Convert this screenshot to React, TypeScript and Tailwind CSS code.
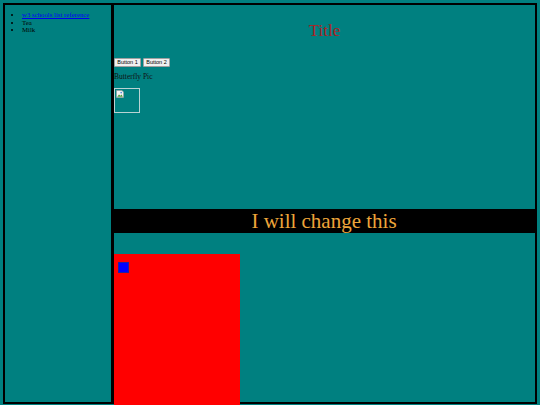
import React from "react";

const serif = { fontFamily: '"Liberation Serif", "Times New Roman", serif' };
const sans = { fontFamily: '"Liberation Sans", Arial, sans-serif' };

function BrokenImage() {
  return (
    <div className="mt-[7px] w-[26px] h-[25px] border border-[#b9d3d3] relative">
      <svg width="8" height="8" viewBox="0 0 8 8" className="absolute left-[1px] top-[1px]">
        <path d="M0.5 0.5 H6 L7.5 2 V7.5 H0.5 Z" fill="#f4f4f4" stroke="#9a9a9a" strokeWidth="0.6" />
        <path d="M1.2 6.8 L3 4.6 L4.4 5.8 L5.6 4.6 L6.8 6.8 Z" fill="#4a9a3a" />
        <circle cx="5.2" cy="2.6" r="0.9" fill="#5b8fd6" />
      </svg>
    </div>
  );
}

export default function App() {
  return (
    <div className="w-[540px] h-[405px] bg-[#008080] overflow-hidden pt-[3px] pl-[3px]" style={serif}>
      <div className="w-[534px] h-[401px] border-2 border-black flex">
        <div className="w-[109px] h-full border-r-[3px] border-black shrink-0">
          <ul className="list-disc pl-[17px] mt-[6px] text-[6.8px] leading-[7.5px] text-black">
            <li>
              <a href="#" className="text-[#0000ee] underline">
                w3 schools list reference
              </a>
            </li>
            <li>Tea</li>
            <li>Milk</li>
          </ul>
        </div>
        <div className="flex-1 flex flex-col">
          <h1 className="shrink-0 text-center text-[17px] leading-[20px] text-[#aa2424] mt-[16px]">Title</h1>
          <div className="shrink-0 flex gap-[2px] mt-[17px]" style={sans}>
            <button className="w-[27px] h-[9px] bg-[#f0f0f0] border border-[#a0a0a0] rounded-[1px] text-[5.5px] leading-none text-black">
              Button 1
            </button>
            <button className="w-[27px] h-[9px] bg-[#f0f0f0] border border-[#a0a0a0] rounded-[1px] text-[5.5px] leading-none text-black">
              Button 2
            </button>
          </div>
          <p className="shrink-0 text-[7.5px] leading-[8px] mt-[6px] text-[#111]">Butterfly Pic</p>
          <div className="shrink-0">
            <BrokenImage />
          </div>
          <div className="shrink-0 mt-[96px] -ml-[1px] h-[24px] bg-black flex items-center justify-center">
            <span className="text-[21px] leading-[24px] text-[#eea53a]">I will change this</span>
          </div>
          <div className="shrink-0 mt-[21px] w-[126px] h-[160px] bg-[#ff0000] pt-[8px] pl-[4px]">
            <div className="w-[11px] h-[11px] bg-[#0000ff] border border-[#2020a0]" />
          </div>
        </div>
      </div>
    </div>
  );
}
